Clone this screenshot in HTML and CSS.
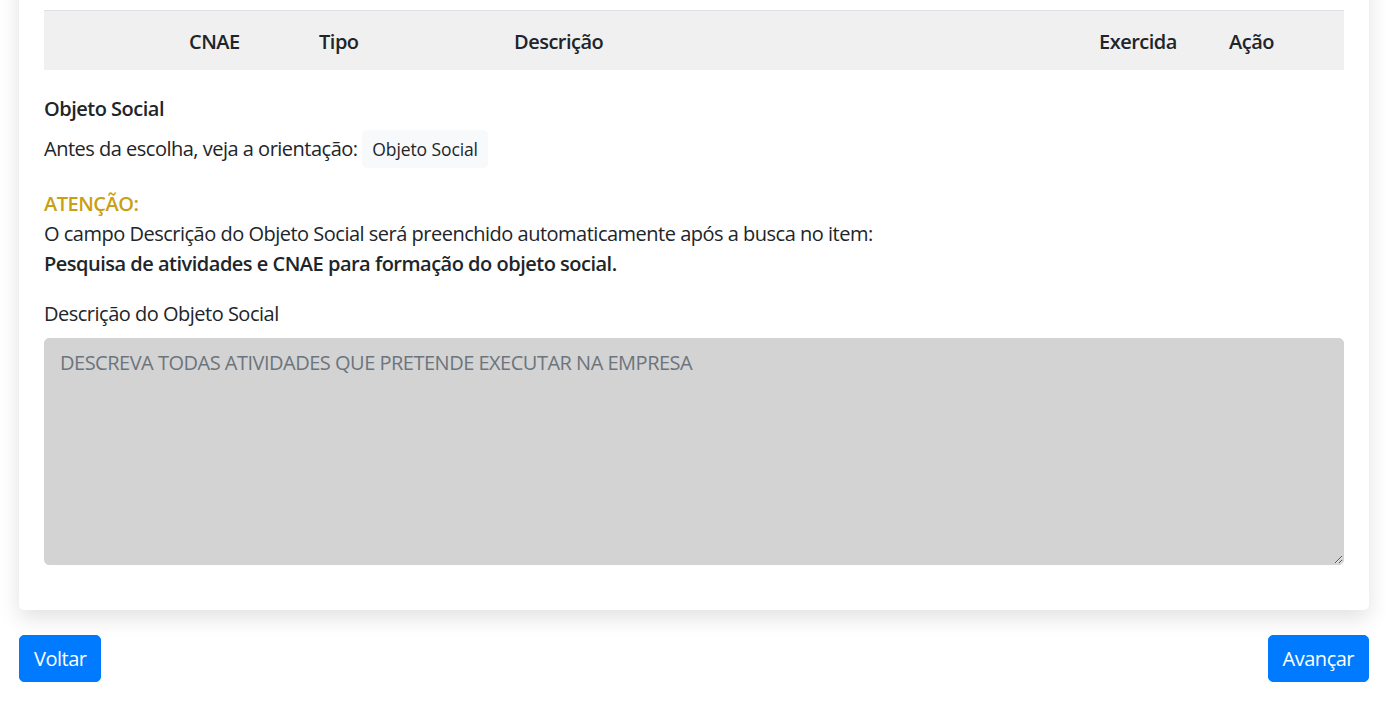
FILE: index.html
```html
<!DOCTYPE html>
<html lang="pt-BR">
<head>
    <meta charset="UTF-8">
    <meta name="viewport" content="width=device-width, initial-scale=1.0">
    <title>Abertura de Empresa - Objeto Social</title>
    <link rel="stylesheet" href="styles.css">
</head>
<body>
    <div class="page">
        <div class="card">
            <div class="card-body">
                <table class="cnae-table">
                    <thead>
                        <tr>
                            <th class="col-sel"></th>
                            <th class="col-cnae">CNAE</th>
                            <th class="col-tipo">Tipo</th>
                            <th class="col-desc">Descrição</th>
                            <th class="col-exerc">Exercida</th>
                            <th class="col-acao">Ação</th>
                        </tr>
                    </thead>
                    <tbody></tbody>
                </table>

                <h5 class="section-title">Objeto Social</h5>
                <p class="guide">
                    Antes da escolha, veja a orientação:
                    <button type="button" class="btn btn-light btn-sm">Objeto Social</button>
                </p>

                <div class="notice">
                    <strong class="notice-title">ATENÇÃO:</strong>
                    <p>O campo Descrição do Objeto Social será preenchido automaticamente após a busca no item:</p>
                    <p><strong>Pesquisa de atividades e CNAE para formação do objeto social.</strong></p>
                </div>

                <div class="form-group">
                    <label for="objetoSocial">Descrição do Objeto Social</label>
                    <textarea id="objetoSocial" class="form-control" readonly placeholder="DESCREVA TODAS ATIVIDADES QUE PRETENDE EXECUTAR NA EMPRESA"></textarea>
                </div>
            </div>
        </div>

        <div class="actions">
            <button type="button" class="btn btn-primary">Voltar</button>
            <button type="button" class="btn btn-primary">Avançar</button>
        </div>
    </div>
</body>
</html>
```

FILE: styles.css
```css
body {
    margin: 0;
    font-family: "Open Sans", "Noto Sans", Arial, sans-serif;
    font-size: 20px;
    line-height: 1.5;
    letter-spacing: -0.5px;
    color: #212529;
    background: #fff;
}
.page {
    padding: 0 17px 0 19px;
}
.card {
    margin-top: -40px;
    background: #fff;
    border-radius: 5px;
    box-shadow: 0 8px 22px rgba(0, 0, 0, 0.12);
}
.card-body {
    padding: 50px 25px 25px;
}
.cnae-table {
    width: 100%;
    border-collapse: collapse;
    margin-bottom: 24px;
}
.cnae-table th {
    background: #f0f0f0;
    border-top: 1px solid #dee2e6;
    text-align: left;
    font-weight: 600;
    padding: 16px 15px 13px;
    height: 30px;
}
.col-sel { width: 100px; }
.col-cnae { width: 100px; }
.col-tipo { width: 165px; }
.col-exerc { width: 100px; }
.col-acao { width: 100px; }
.section-title {
    margin: 0 0 6px;
    font-size: 20px;
    font-weight: 600;
    line-height: 1.5;
}
.guide {
    margin: 0 0 21px;
}
.btn {
    font-family: inherit;
    letter-spacing: inherit;
    border: 1px solid transparent;
    border-radius: 5px;
    cursor: pointer;
}
.btn-light {
    background: #f8f9fa;
    border-color: #f8f9fa;
    color: #212529;
}
.btn-sm {
    font-size: 17.5px;
    line-height: 1.5;
    letter-spacing: -0.1px;
    padding: 5px 9px;
}
.btn-primary {
    background: #007bff;
    border-color: #007bff;
    color: #fff;
    font-size: 20px;
    line-height: 1.5;
    padding: 7.5px 14px;
}
.notice {
    margin-bottom: 20px;
}
.notice-title {
    color: #c9a013;
    font-weight: 600;
}
.notice p {
    margin: 0;
}
.notice p strong {
    font-weight: 600;
}
.form-group {
    margin-bottom: 20px;
}
.form-group label {
    display: block;
    margin-bottom: 9px;
}
.form-control {
    display: block;
    box-sizing: border-box;
    width: 100%;
    height: 227px;
    padding: 9px 15px;
    font-family: inherit;
    font-size: 20px;
    line-height: 1.5;
    letter-spacing: inherit;
    color: #495057;
    background: #d3d3d3;
    border: 1px solid #d3d3d3;
    border-radius: 5px;
    resize: vertical;
}
.form-control::placeholder {
    color: #6c757d;
}
.actions {
    display: flex;
    justify-content: space-between;
    margin-top: 25px;
}
```
